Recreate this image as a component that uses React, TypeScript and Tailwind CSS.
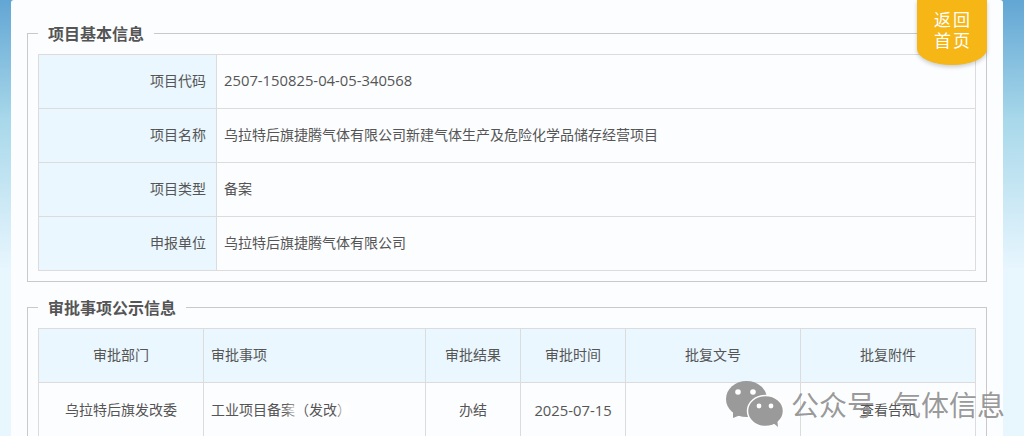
const basicRows = [
  { label: "项目代码", value: "2507-150825-04-05-340568", big: true },
  { label: "项目名称", value: "乌拉特后旗捷腾气体有限公司新建气体生产及危险化学品储存经营项目" },
  { label: "项目类型", value: "备案" },
  { label: "申报单位", value: "乌拉特后旗捷腾气体有限公司" },
];

const cols = ["w-[165px]", "w-[222px]", "w-[95px]", "w-[105px]", "w-[175px]", "w-[174px]"];
const heads = ["审批部门", "审批事项", "审批结果", "审批时间", "批复文号", "批复附件"];
const cells = ["乌拉特后旗发改委", "工业项目备案（发改）", "办结", "2025-07-15", "", "查看告知"];

function WeChatIcon() {
  return (
    <svg width="58" height="46" viewBox="0 0 58 46" fill="#9a9a9a">
      <ellipse cx="20.500" cy="18" rx="20.500" ry="18" />
      <path d="M7 29 L7 37 L17 33 Z" />
      <ellipse cx="39.500" cy="30" rx="18" ry="15.500" stroke="#fff" strokeWidth="1.500" />
      <path d="M46 41 L52 46 L51 37 Z" />
      <circle cx="12" cy="11" r="2.800" fill="#fff" />
      <circle cx="27" cy="11" r="2.800" fill="#fff" />
      <circle cx="33" cy="25" r="2.400" fill="#fff" />
      <circle cx="45" cy="25" r="2.400" fill="#fff" />
    </svg>
  );
}

export default function App() {
  return (
    <main className="relative h-[436px] w-[1024px] overflow-hidden bg-[linear-gradient(180deg,#62a6d4_0px,#a8d8ea_120px,#e8f6fe_270px)] px-[11px] font-['Noto_Sans_CJK_SC','Noto_Sans',sans-serif] text-[14px] text-[#555]">
      <div className="relative h-[500px] w-[992px] rounded-t-[3px] bg-[#fcfdff] px-[16px] pt-[23px]">
        <a className="absolute right-[16px] top-0 flex h-[65px] w-[70px] items-center justify-center rounded-b-[35px_16px] bg-[#f5b616] pb-[7px] pl-[2px] text-center text-[17px] leading-[21px] tracking-[2px] text-white shadow-[0_2px_4px_rgba(0,0,0,0.2)]">
          返回
          <br />
          首页
        </a>

        <fieldset className="h-[259px] border border-[#c9c9c9] px-[10px]">
          <legend className="px-[10px] text-[16px] leading-[21px] font-bold text-[#555]">项目基本信息</legend>
          <div className="mt-[10px] border border-b-0 border-[#dcdcdc]">
            {basicRows.map((row) => (
              <div key={row.label} className="flex h-[54px] border-b border-[#dcdcdc]">
                <div className="flex w-[178px] items-center justify-end border-r border-[#dcdcdc] bg-[#eaf7fe] pr-[10px] pb-[2px]">
                  {row.label}
                </div>
                <div className={`flex flex-1 items-center pb-[2px] pl-[7px] ${row.big ? "font-['Open_Sans',sans-serif] text-[14.8px]" : ""}`}>
                  {row.value}
                </div>
              </div>
            ))}
          </div>
        </fieldset>

        <fieldset className="mt-[15px] h-[200px] border border-[#c9c9c9] px-[10px]">
          <legend className="px-[10px] text-[16px] leading-[21px] font-bold text-[#555]">审批事项公示信息</legend>
          <div className="mt-[10px] border border-[#dcdcdc]">
            <div className="flex h-[54px] border-b border-[#dcdcdc] bg-[#eaf7fe]">
              {heads.map((h, i) => (
                <div key={h} className={`flex items-center border-r border-[#dcdcdc] pb-[2px] last:border-r-0 ${cols[i]} ${i === 1 ? "pl-[7px]" : "justify-center"}`}>
                  {h}
                </div>
              ))}
            </div>
            <div className="flex h-[70px]">
              {cells.map((c, i) => (
                <div key={i} className={`flex h-full items-start border-r border-[#dcdcdc] pt-[16px] last:border-r-0 ${cols[i]} ${i === 1 ? "pl-[7px]" : "justify-center"} ${i === 3 ? "font-['Open_Sans',sans-serif] text-[14.8px]" : ""}`}>
                  {c}
                </div>
              ))}
            </div>
          </div>
        </fieldset>
      </div>

      {/* 水印 */}
      <div className="absolute left-[289px] top-[405px] h-[10px] w-[10px] bg-white/90 blur-[3px]" />
      <div className="absolute left-[340px] top-[402px] h-[16px] w-[10px] bg-white/90 blur-[3px]" />
      <div className="absolute left-[726px] top-[381px] flex items-center gap-[7px]">
        <WeChatIcon />
        <span className="flex gap-[18px] whitespace-nowrap text-[28px] leading-[36px] text-[#8c8c8c]/90">
          <span>公众号</span>
          <span>气体信息</span>
        </span>
      </div>
    </main>
  );
}
